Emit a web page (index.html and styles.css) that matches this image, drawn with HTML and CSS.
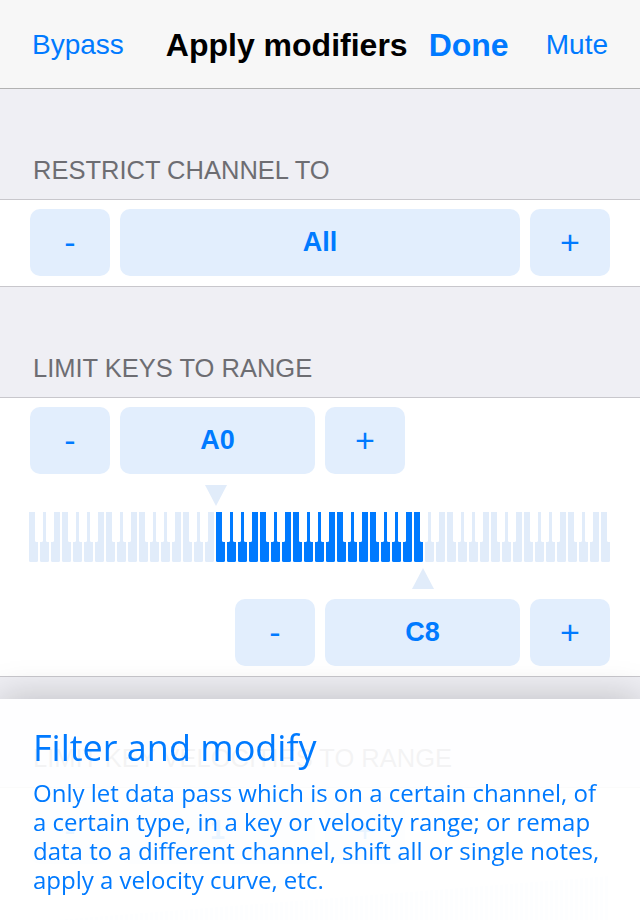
FILE: index.html
```html
<!DOCTYPE html>
<html lang="en">
<head>
<meta charset="UTF-8">
<meta name="viewport" content="width=device-width, initial-scale=1.0">
<title>Apply modifiers</title>
<link rel="stylesheet" href="styles.css">
</head>
<body>
<div class="nav">
  <a class="nav-btn" href="#">Bypass</a>
  <span class="nav-title">Apply modifiers</span>
  <a class="nav-btn done" href="#">Done</a>
  <a class="nav-btn mute" href="#">Mute</a>
</div>

<div class="group">RESTRICT CHANNEL TO</div>
<div class="panel">
  <div class="stepper">
    <button class="btn step">-</button>
    <button class="btn value wide">All</button>
    <button class="btn step">+</button>
  </div>
</div>

<div class="group">LIMIT KEYS TO RANGE</div>
<div class="panel">
  <div class="stepper">
    <button class="btn step">-</button>
    <button class="btn value">A0</button>
    <button class="btn step">+</button>
  </div>
  <div class="markers top">
    <span class="tri down" style="margin-left: 175.5px"></span>
  </div>
  <div class="keys">
    <span class="key"></span><span class="key"></span><span class="key"></span><span class="key"></span><span class="key"></span><span class="key"></span><span class="key"></span>
    <span class="key"></span><span class="key"></span><span class="key"></span><span class="key"></span><span class="key"></span><span class="key"></span><span class="key"></span>
    <span class="key"></span><span class="key"></span><span class="key"></span><span class="key"></span><span class="key"></span><span class="key"></span><span class="key"></span>
    <span class="key"></span><span class="key"></span><span class="key"></span><span class="key"></span><span class="key"></span><span class="key"></span><span class="key"></span>
    <span class="key"></span><span class="key"></span><span class="key"></span><span class="key"></span><span class="key"></span><span class="key"></span><span class="key"></span>
    <span class="key"></span><span class="key"></span><span class="key"></span><span class="key"></span><span class="key"></span><span class="key"></span><span class="key"></span>
    <span class="key"></span><span class="key"></span><span class="key"></span><span class="key"></span><span class="key"></span><span class="key"></span><span class="key"></span>
    <span class="key"></span><span class="key"></span><span class="key"></span><span class="key"></span>
  </div>
  <div class="markers bottom">
    <span class="tri up" style="margin-left: 383px"></span>
  </div>
  <div class="stepper end">
    <button class="btn step">-</button>
    <button class="btn value">C8</button>
    <button class="btn step">+</button>
  </div>
</div>

<div class="group">LIMIT KEY VELOCITIES TO RANGE</div>
<div class="panel">
  <div class="stepper">
    <button class="btn step">-</button>
    <button class="btn value">1</button>
    <button class="btn step">+</button>
  </div>
  <div class="ramp"></div>
</div>

<!-- tutorial overlay -->
<div class="tip">
  <h2 class="tip-title">Filter and modify</h2>
  <p class="tip-text">Only let data pass which is on a certain channel, of a certain type, in a key or velocity range; or remap data to a different channel, shift all or single notes, apply a velocity curve, etc.</p>
</div>
</body>
</html>
```

FILE: styles.css
```css
body {
  font-family: "Liberation Sans", Arial, sans-serif;
  background-color: #efeff4;
  margin: 0;
  padding: 0;
  height: 920px;
  overflow: hidden;
}
.nav {
  height: 89px;
  display: flex;
  align-items: center;
  padding: 2px 32px 0;
  box-sizing: border-box;
  background-color: #f7f7f7;
  border-bottom: 1px solid #b2b2b2;
}
.nav-btn {
  color: #007aff;
  font-size: 28px;
  text-decoration: none;
}
.nav-title {
  margin-left: 42px;
  font-size: 32px;
  font-weight: bold;
  color: #000;
}
.done {
  margin-left: 21px;
  font-size: 32px;
  font-weight: bold;
}
.mute {
  margin-left: auto;
}
.group {
  height: 110px;
  box-sizing: border-box;
  padding: 0 33px 16px;
  display: flex;
  align-items: flex-end;
  font-size: 25.5px;
  line-height: 26px;
  color: #6d6d72;
}
.panel {
  background-color: white;
  border-top: 1px solid #c8c7cc;
  border-bottom: 1px solid #c8c7cc;
  padding: 9px 0 10px;
}
.stepper {
  display: flex;
  gap: 10px;
  padding: 0 30px;
}
.stepper.end {
  justify-content: flex-end;
}
.btn {
  height: 67px;
  border: none;
  border-radius: 10px;
  background-color: #e2eefd;
  color: #007aff;
  font-family: "Liberation Sans", Arial, sans-serif;
  padding: 0;
}
.step {
  width: 80px;
  font-size: 34px;
}
.value {
  width: 195px;
  font-size: 27px;
  font-weight: bold;
}
.value.wide {
  flex: 1;
}
.markers {
  display: flex;
  margin-left: 29px;
  height: 21px;
}
.markers.top {
  margin-top: 11px;
  margin-bottom: 6px;
}
.markers.bottom {
  margin-top: 6px;
  margin-bottom: 10px;
}
.tri {
  width: 0;
  height: 0;
  border-left: 11.5px solid transparent;
  border-right: 11.5px solid transparent;
}
.tri.down {
  border-top: 21px solid #e1ecfa;
}
.tri.up {
  border-bottom: 21px solid #e1ecfa;
}
.keys {
  display: flex;
  gap: 2px;
  margin-left: 29px;
  height: 50px;
}
.key {
  flex: none;
  width: 9px;
  height: 50px;
  background-color: #e1ecfa;
  border-radius: 0 0 1.5px 1.5px;
  position: relative;
}
/* black keys sit after C, D, F, G, A */
.key:nth-child(7n+1)::after,
.key:nth-child(7n+2)::after,
.key:nth-child(7n+4)::after,
.key:nth-child(7n+5)::after,
.key:nth-child(7n+6)::after {
  content: "";
  position: absolute;
  top: 0;
  right: -5px;
  width: 8px;
  height: 30px;
  background-color: white;
  border-radius: 0 0 1.5px 1.5px;
  z-index: 1;
}
.key:nth-child(n+18):nth-child(-n+36) {
  background-color: #007aff;
}
.ramp {
  margin: 12px 30px 0;
  height: 46px;
  background: repeating-linear-gradient(90deg, #e1ecfa 0 3px, transparent 3px 5px);
  clip-path: polygon(0 100%, 100% 0, 100% 100%);
}
.tip {
  position: fixed;
  left: 0;
  right: 0;
  bottom: 0;
  height: 221px;
  box-sizing: border-box;
  padding: 28px 36px 0 33px;
  background-color: rgba(255, 255, 255, 0.92);
  box-shadow: 0 0 36px rgba(0, 0, 0, 0.22);
  font-family: "Open Sans", sans-serif;
  color: #007aff;
}
.tip-title {
  margin: 0 0 9px;
  font-size: 36px;
  line-height: 42px;
  font-weight: normal;
}
.tip-text {
  margin: 0;
  font-size: 24px;
  line-height: 29px;
}
```
